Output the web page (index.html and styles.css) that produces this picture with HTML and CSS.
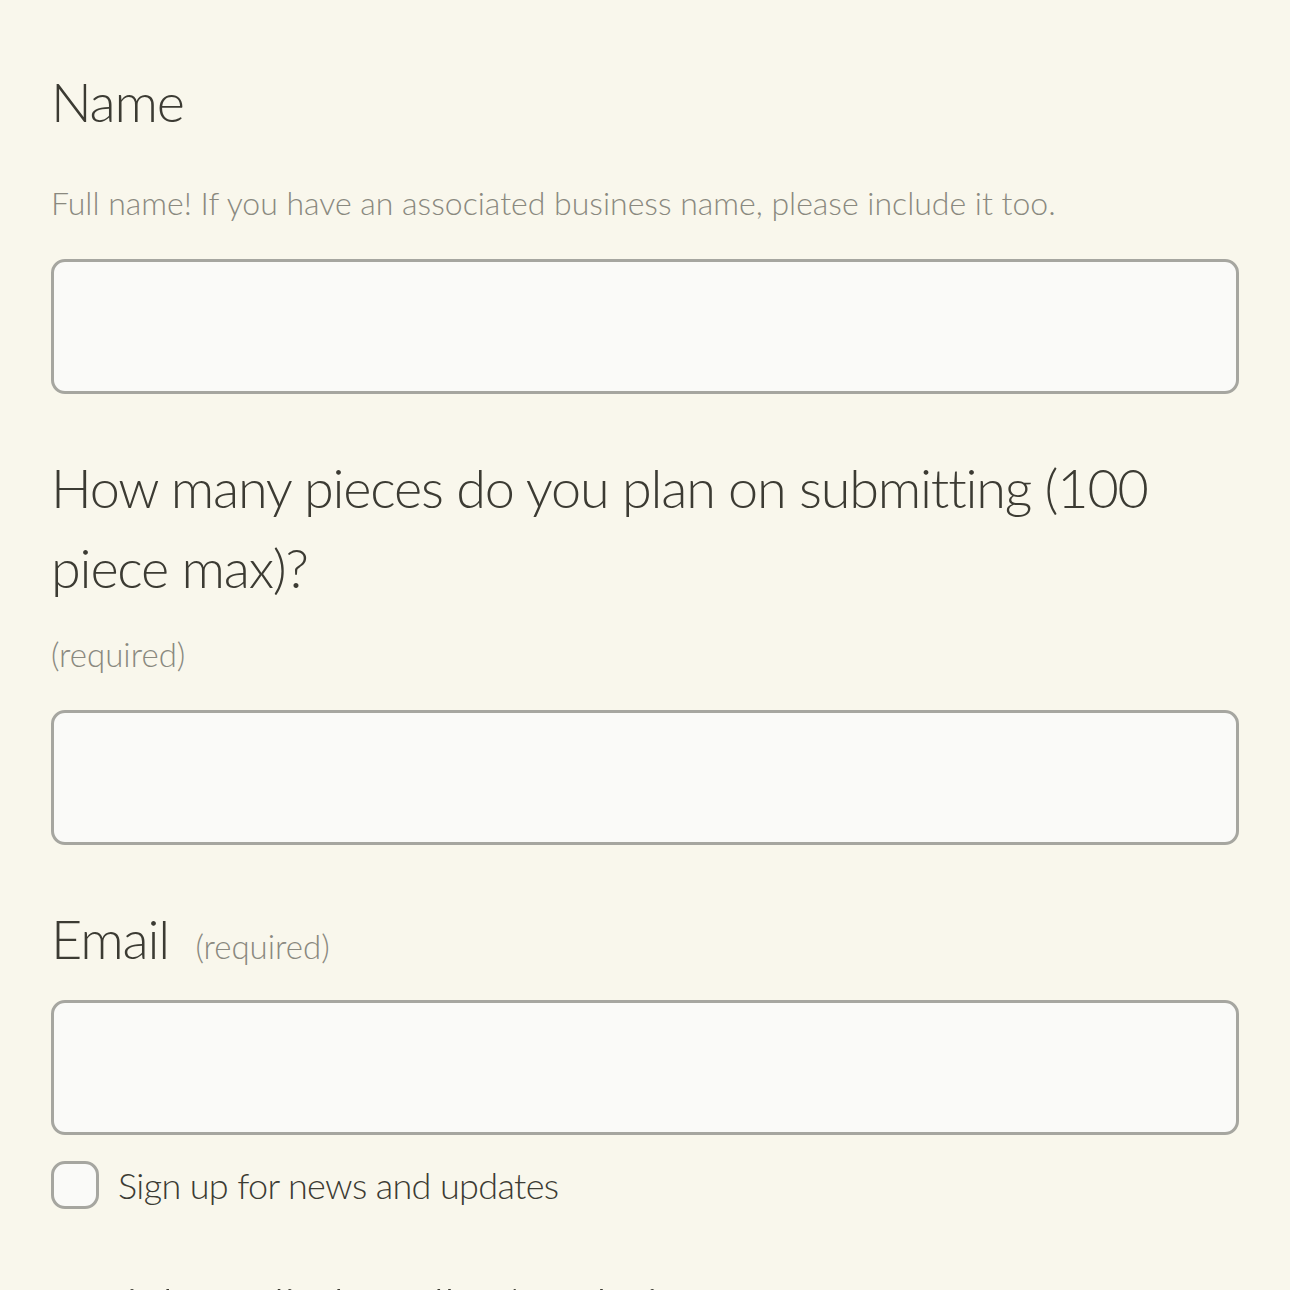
FILE: index.html
```html
<!DOCTYPE html>
<html lang="en">
<head>
  <meta charset="UTF-8">
  <title>Submission form</title>
  <link rel="stylesheet" href="styles.css">
</head>
<body>
  <form class="form">
    <div class="field">
      <label class="field-title" for="name">Name</label>
      <p class="field-desc">Full name! If you have an associated business name, please include it too.</p>
      <input class="field-input" id="name" type="text">
    </div>

    <div class="field">
      <label class="field-title" for="pieces">How many pieces do you plan on submitting (100 piece max)?</label>
      <p class="field-desc field-desc-req">(required)</p>
      <input class="field-input" id="pieces" type="text">
    </div>

    <div class="field">
      <label class="field-title" for="email">Email <span class="field-required">(required)</span></label>
      <input class="field-input field-input-tight" id="email" type="email">
      <label class="field-check">
        <input type="checkbox">
        <span class="field-check-box"></span>
        <span>Sign up for news and updates</span>
      </label>
    </div>

    <div class="field">
      <label class="field-title" for="handle">social media handle / website @</label>
    </div>
  </form>
</body>
</html>
```

FILE: styles.css
```css
body {
  margin: 0;
  background: #f9f7ec;
  font-family: Lato, "Open Sans", sans-serif;
  font-weight: 300;
  color: #3c3b33;
}

.form {
  display: flex;
  flex-direction: column;
  padding: 62px 51px 0;
}

.field {
  display: flex;
  flex-direction: column;
  margin-bottom: 54px;
}

.field-title {
  font-size: 54px;
  line-height: 80px;
  letter-spacing: -1.2px;
}

.field-desc {
  margin: 39px 0 0;
  font-size: 32px;
  line-height: 44px;
  color: #8a897f;
}

.field-desc-req {
  margin-top: 24px;
  font-size: 33px;
}

.field-required {
  margin-left: 13px;
  font-size: 33px;
  letter-spacing: 0;
  color: #8a897f;
}

.field-input {
  margin-top: 34px;
  height: 135px;
  box-sizing: border-box;
  border: 3px solid #a6a6a0;
  border-radius: 14px;
  background: #fafaf8;
  font: inherit;
}

.field-input-tight {
  margin-top: 14px;
}

.field-check {
  display: flex;
  align-items: center;
  gap: 19px;
  margin: 26px 0 4px;
  font-size: 36px;
  letter-spacing: -0.65px;
}

.field-check input {
  display: none;
}

.field-check-box {
  width: 48px;
  height: 48px;
  box-sizing: border-box;
  border: 3px solid #a6a6a0;
  border-radius: 14px;
  background: #fafaf8;
}
```
